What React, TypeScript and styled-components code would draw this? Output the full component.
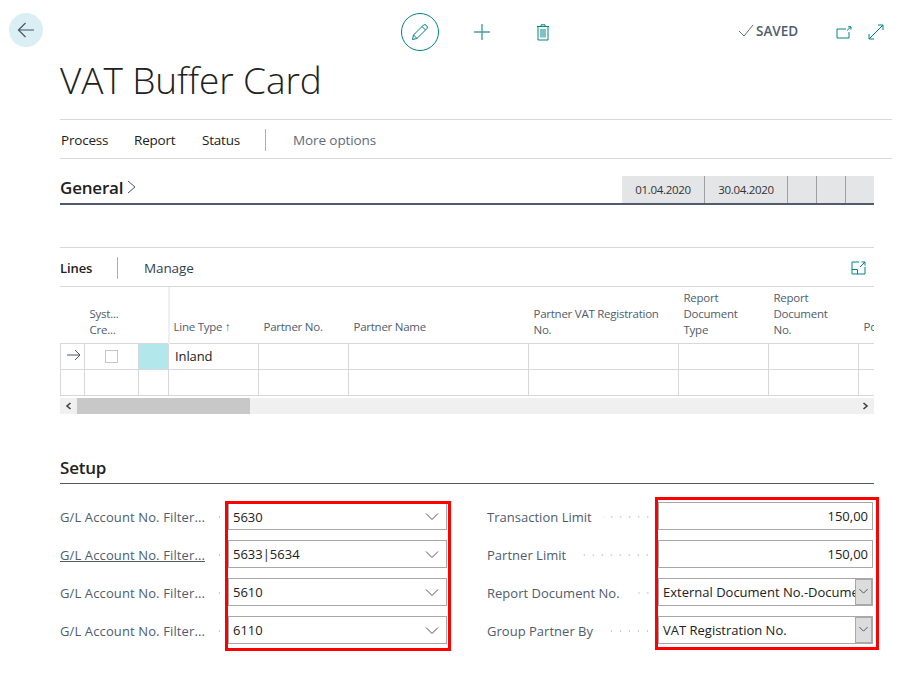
import React from 'react'
import styled, { createGlobalStyle } from 'styled-components'

const GlobalStyle = createGlobalStyle`
  html, body {
    margin: 0;
    padding: 0;
    background: #fff;
    color: #212121;
    font-family: 'Open Sans', 'Noto Sans', sans-serif;
  }
  * { box-sizing: border-box; }
`

const teal = '#00838a'
const slate = '#505c6d'
const rule = '#d6d8dc'

const Page = styled.div`
  width: 910px;
  height: 678px;
  overflow: hidden;
  position: relative;
`

const TopBar = styled.div`
  height: 60px;
  display: flex;
  align-items: flex-start;
  padding: 13px 0 0 9px;
`

const BackButton = styled.div`
  width: 34px;
  height: 34px;
  border-radius: 50%;
  background: #d9eff3;
  display: flex;
  align-items: center;
  justify-content: center;
`

const Actions = styled.div`
  display: flex;
  align-items: center;
  margin-left: 358px;
`

const EditButton = styled.div`
  width: 38px;
  height: 38px;
  border-radius: 50%;
  border: 1px solid ${teal};
  display: flex;
  align-items: center;
  justify-content: center;
  margin-right: 34px;
`

const IconSlot = styled.div<{ $gap: number }>`
  display: flex;
  margin-right: ${p => p.$gap}px;
`

const Saved = styled.div`
  display: flex;
  align-items: center;
  gap: 2px;
  height: 38px;
  margin-top: -3px;
  margin-right: 38px;
  font-size: 13.5px;
  font-weight: 600;
  color: ${slate};
`

const Content = styled.div`
  padding-left: 60px;
`

const Title = styled.h1`
  margin: 0;
  height: 59px;
  font-size: 37px;
  line-height: 40px;
  font-weight: 300;
  letter-spacing: -0.1px;
  color: #212121;
`

const CommandBar = styled.div`
  width: 832px;
  height: 40px;
  padding-top: 2px;
  border-top: 1px solid ${rule};
  border-bottom: 1px solid ${rule};
  display: flex;
  align-items: center;
  font-size: 13.5px;
`

const Command = styled.span<{ $width: number; $muted?: boolean }>`
  width: ${p => p.$width}px;
  padding-left: 1px;
  letter-spacing: ${p => (p.$muted ? '-0.1px' : '-0.2px')};
  color: ${p => (p.$muted ? '#5f6b7c' : '#212121')};
`

const BarDivider = styled.span<{ $margin: number }>`
  width: 1px;
  height: 22px;
  background: #a9b0ba;
  margin-right: ${p => p.$margin}px;
`

const SectionHead = styled.div<{ $height: number; $weight: number; $color: string }>`
  width: 814px;
  height: ${p => p.$height}px;
  border-bottom: ${p => p.$weight}px solid ${p => p.$color};
  display: flex;
  align-items: flex-end;
  justify-content: space-between;
`

const SectionTitle = styled.div<{ $lift?: boolean }>`
  display: flex;
  align-items: center;
  gap: 4px;
  height: 30px;
  margin-bottom: ${p => (p.$lift ? 1 : 0)}px;
  font-size: 17px;
  font-weight: 600;
  letter-spacing: -0.2px;
  color: #212121;
`

const DateStrip = styled.div`
  display: flex;
  height: 27px;
  background: #e4e5e7;
`

const DateCell = styled.div<{ $width: number; $last?: boolean }>`
  width: ${p => p.$width}px;
  border-right: ${p => (p.$last ? 'none' : '1px solid #a0a0a0')};
  display: flex;
  align-items: center;
  justify-content: center;
  font-size: 11.5px;
  letter-spacing: -0.3px;
  color: #333;
`

const LinesBar = styled.div`
  width: 814px;
  height: 40px;
  margin-top: 42px;
  padding-top: 1px;
  border-top: 1px solid ${rule};
  border-bottom: 1px solid ${rule};
  display: flex;
  align-items: center;
  font-size: 13.5px;
`

const LinesTitle = styled.span`
  width: 57px;
  font-size: 13px;
  font-weight: 600;
  letter-spacing: -0.1px;
`

const LinesManage = styled.span`
  flex: 1;
  color: #333f50;
  letter-spacing: -0.1px;
`

const ExpandSlot = styled.span`
  display: flex;
  margin-right: 8px;
`

const GridClip = styled.div`
  width: 814px;
  overflow: hidden;
`

const Table = styled.table`
  border-collapse: collapse;
  table-layout: fixed;
  width: 860px;
`

const HeadCell = styled.th<{ $frozen?: boolean; $single?: boolean }>`
  height: 56px;
  padding: 0 4px ${p => (p.$single ? 8 : 5)}px ${p => (p.$frozen ? 4 : 5)}px;
  vertical-align: bottom;
  text-align: left;
  font-size: 11.5px;
  line-height: 16px;
  font-weight: 400;
  letter-spacing: -0.25px;
  color: ${slate};
  border-bottom: 1px solid ${rule};
  border-left: ${p => (p.$frozen ? `2px solid #eeeff1` : 'none')};
  white-space: pre-line;
`

const Cell = styled.td<{ $accent?: boolean }>`
  height: 26px;
  padding: 0 6px;
  font-size: 13px;
  letter-spacing: -0.1px;
  border: 1px solid ${rule};
  border-top: none;
  background: ${p => (p.$accent ? '#b2e8ec' : '#fff')};
`

const CheckBox = styled.div`
  width: 13px;
  height: 13px;
  margin: 0 auto;
  border: 1px solid #c4c6c9;
  background: #fff;
`

const ScrollTrack = styled.div`
  width: 814px;
  height: 16px;
  margin-top: 2px;
  background: #f0f0f0;
  display: flex;
  align-items: center;
`

const ScrollArrow = styled.div`
  width: 17px;
  display: flex;
  justify-content: center;
`

const ScrollThumb = styled.div`
  width: 173px;
  height: 16px;
  background: #c8c8c8;
`

const ScrollRest = styled.div`
  flex: 1;
`

const FieldsArea = styled.div`
  display: flex;
  width: 819px;
  margin-top: 13px;
`

const FieldColumn = styled.div<{ $width: number }>`
  width: ${p => p.$width}px;
  display: flex;
  align-items: flex-start;
`

const Labels = styled.div<{ $width: number }>`
  width: ${p => p.$width}px;
  display: flex;
  flex-direction: column;
  gap: 10px;
  padding-top: 6px;
`

const LabelRow = styled.div<{ $spacing: number }>`
  height: 28px;
  display: flex;
  align-items: center;
  font-size: 13px;
  letter-spacing: ${p => p.$spacing}px;
  color: ${slate};
  white-space: nowrap;
`

const LabelText = styled.span<{ $link?: boolean }>`
  text-decoration: ${p => (p.$link ? 'underline' : 'none')};
`

const Leader = styled.span<{ $end: number }>`
  flex: 1;
  min-width: 0;
  margin: 0 ${p => p.$end}px 0 11px;
  height: 2px;
  background-image: radial-gradient(circle, #c5c8cc 1px, transparent 1px);
  background-size: 9px 2px;
  background-position: right;
`

const RedFrame = styled.div<{ $pad: string; $width: number; $top: number }>`
  width: ${p => p.$width}px;
  margin-top: ${p => p.$top}px;
  border: 3px solid #f00;
  padding: ${p => p.$pad};
  display: flex;
  flex-direction: column;
  gap: 10px;
`

const Field = styled.div<{ $right?: boolean; $clipped?: boolean }>`
  position: relative;
  height: ${p => (p.$clipped ? 26 : 28)}px;
  border: 1px solid #a8a8a8;
  border-top-width: ${p => (p.$clipped ? 0 : 1)}px;
  display: flex;
  align-items: center;
  justify-content: ${p => (p.$right ? 'flex-end' : 'flex-start')};
  padding: 1px 4px 0;
  font-size: 13px;
  letter-spacing: 0;
  color: #212121;
  overflow: hidden;
  white-space: nowrap;
`

const Chevron = styled.span`
  position: absolute;
  right: 6px;
  top: calc(50% + 1px);
  transform: translateY(-50%);
  display: flex;
`

const SelectButton = styled.span`
  position: absolute;
  right: 0;
  top: 0;
  bottom: 0;
  width: 17px;
  background: #dcdcdc;
  border: 1px solid #a8a8a8;
  display: flex;
  align-items: center;
  justify-content: center;
`

const ChevronIcon = ({ size = 16, weight = 1 }: { size?: number; weight?: number }) => (
  <svg width={size} height={size * 0.625} viewBox="0 0 16 10" fill="none" stroke="#4a5464" strokeWidth={weight}>
    <path d="M2 1.5 L8 7.5 L14 1.5" />
  </svg>
)

const leftFields = ['5630', '5633|5634', '5610', '6110']
const rightLabels = ['Transaction Limit', 'Partner Limit', 'Report Document No.', 'Group Partner By']

const columns = [
  { w: 24, text: '' },
  { w: 54, text: 'Syst...\nCre...' },
  { w: 30, text: '' },
  { w: 90, text: 'Line Type ↑', frozen: true, single: true },
  { w: 90, text: 'Partner No.', single: true },
  { w: 180, text: 'Partner Name', single: true },
  { w: 150, text: 'Partner VAT Registration\nNo.' },
  { w: 90, text: 'Report\nDocument\nType' },
  { w: 90, text: 'Report\nDocument\nNo.' },
  { w: 62, text: 'Posting', single: true }
]

const App = () => {
  return (
    <Page>
      <GlobalStyle />
      <TopBar>
        <BackButton>
          <svg width="18" height="16" viewBox="0 0 18 16" fill="none" stroke="#4a5464" strokeWidth="1.2">
            <path d="M17 8 H1.5 M8.5 1 L1.5 8 L8.5 15" />
          </svg>
        </BackButton>
        <Actions>
          <EditButton>
            <svg width="18" height="18" viewBox="0 0 18 18" fill="none" stroke={teal} strokeWidth="1">
              <path d="M1.5 16.5 L2.5 12 L12.5 2 Q14 1 15.5 2.5 Q17 4 16 5.5 L6 15.5 Z M2.5 12 L6 15.5 M11 3.5 L14.5 7" />
            </svg>
          </EditButton>
          <IconSlot $gap={45}>
            <svg width="18" height="18" viewBox="0 0 18 18" fill="none" stroke="#4a9da3" strokeWidth="1.4">
              <path d="M9 1 V17 M1 9 H17" />
            </svg>
          </IconSlot>
          <IconSlot $gap={188}>
            <svg width="14" height="17" viewBox="0 0 14 17" fill="none" stroke={teal} strokeWidth="1">
              <path d="M1 2.5 H13 M5 2.5 V0.8 H9 V2.5 M2 2.5 V16 H12 V2.5 M5 5 V13.5 M7 5 V13.5 M9 5 V13.5" />
            </svg>
          </IconSlot>
          <Saved>
            <svg width="16" height="13" viewBox="0 0 16 13" fill="none" stroke="#5f6b7c" strokeWidth="1">
              <path d="M1 7 L6 12 L15 1" />
            </svg>
            SAVED
          </Saved>
          <IconSlot $gap={16}>
            <svg width="16" height="13" viewBox="0 0 16 13" fill="none" stroke={teal} strokeWidth="1">
              <path d="M10 3 H1 V12 H13 V6 M11 4.5 L15 0.8 M12 0.8 H15 V3.5" />
            </svg>
          </IconSlot>
          <IconSlot $gap={0}>
            <svg width="16" height="16" viewBox="0 0 16 16" fill="none" stroke={teal} strokeWidth="1">
              <path d="M1 15 L15 1 M10 1 H15 V6 M1 10 V15 H6" />
            </svg>
          </IconSlot>
        </Actions>
      </TopBar>

      <Content>
        <Title>VAT Buffer Card</Title>
        <CommandBar>
          <Command $width={73}>Process</Command>
          <Command $width={68}>Report</Command>
          <Command $width={64}>Status</Command>
          <BarDivider $margin={26} />
          <Command $width={120} $muted>More options</Command>
        </CommandBar>

        <SectionHead $height={46} $weight={2} $color={slate}>
          <SectionTitle $lift>
            General
            <svg width="9" height="14" viewBox="0 0 9 14" fill="none" stroke="#4a5464" strokeWidth="1">
              <path d="M1 1 L8 7 L1 13" />
            </svg>
          </SectionTitle>
          <DateStrip>
            <DateCell $width={83}>01.04.2020</DateCell>
            <DateCell $width={83}>30.04.2020</DateCell>
            <DateCell $width={29} />
            <DateCell $width={29} />
            <DateCell $width={28} $last />
          </DateStrip>
        </SectionHead>

        <LinesBar>
          <LinesTitle>Lines</LinesTitle>
          <BarDivider $margin={26} />
          <LinesManage>Manage</LinesManage>
          <ExpandSlot>
            <svg width="15" height="14" viewBox="0 0 15 14" fill="none" stroke={teal} strokeWidth="1">
              <path d="M8 1 H1 V13 H14 V6 M1 8.5 H6.5 V13 M9 6 L14 1 M10.5 1 H14 V4.5" />
            </svg>
          </ExpandSlot>
        </LinesBar>

        <GridClip>
          <Table>
            <colgroup>
              {columns.map((c, i) => (
                <col key={i} style={{ width: c.w }} />
              ))}
            </colgroup>
            <thead>
              <tr>
                {columns.map((c, i) => (
                  <HeadCell key={i} $frozen={c.frozen} $single={c.single}>{c.text}</HeadCell>
                ))}
              </tr>
            </thead>
            <tbody>
              <tr>
                <Cell>
                  <svg width="14" height="12" viewBox="0 0 14 12" fill="none" stroke="#4a5464" strokeWidth="1">
                    <path d="M0 6 H13 M8 1 L13 6 L8 11" />
                  </svg>
                </Cell>
                <Cell><CheckBox /></Cell>
                <Cell $accent />
                <Cell>Inland</Cell>
                {columns.slice(4).map((c, i) => (
                  <Cell key={i} />
                ))}
              </tr>
              <tr>
                {columns.map((c, i) => (
                  <Cell key={i} />
                ))}
              </tr>
            </tbody>
          </Table>
        </GridClip>

        <ScrollTrack>
          <ScrollArrow>
            <svg width="7" height="8" viewBox="0 0 7 8" fill="none" stroke="#404040" strokeWidth="1.6">
              <path d="M5.5 1 L2 4 L5.5 7" />
            </svg>
          </ScrollArrow>
          <ScrollThumb />
          <ScrollRest />
          <ScrollArrow>
            <svg width="7" height="8" viewBox="0 0 7 8" fill="none" stroke="#404040" strokeWidth="1.6">
              <path d="M1.5 1 L5 4 L1.5 7" />
            </svg>
          </ScrollArrow>
        </ScrollTrack>

        <SectionHead $height={70} $weight={1} $color={slate}>
          <SectionTitle>Setup</SectionTitle>
        </SectionHead>

        <FieldsArea>
          <FieldColumn $width={427}>
            <Labels $width={165}>
              {leftFields.map((_, i) => (
                <LabelRow key={i} $spacing={0.12}>
                  <LabelText $link={i === 1}>G/L Account No. Filter...</LabelText>
                  <Leader $end={1} />
                </LabelRow>
              ))}
            </Labels>
            <RedFrame $width={226} $top={4} $pad="0 1px 4px 0">
              {leftFields.map((v, i) => (
                <Field key={v} $clipped={i === 0}>
                  {v}
                  <Chevron><ChevronIcon /></Chevron>
                </Field>
              ))}
            </RedFrame>
          </FieldColumn>
          <FieldColumn $width={392}>
            <Labels $width={168}>
              {rightLabels.map(label => (
                <LabelRow key={label} $spacing={0.02}>
                  {label}
                  <Leader $end={3} />
                </LabelRow>
              ))}
            </Labels>
            <RedFrame $width={224} $top={0} $pad="2px 3px 3px 0">
              <Field $right>150,00</Field>
              <Field $right>150,00</Field>
              <Field>
                External Document No.-Document
                <SelectButton><ChevronIcon size={11} weight={1.4} /></SelectButton>
              </Field>
              <Field>
                VAT Registration No.
                <SelectButton><ChevronIcon size={11} weight={1.4} /></SelectButton>
              </Field>
            </RedFrame>
          </FieldColumn>
        </FieldsArea>
      </Content>
    </Page>
  )
}

export default App
